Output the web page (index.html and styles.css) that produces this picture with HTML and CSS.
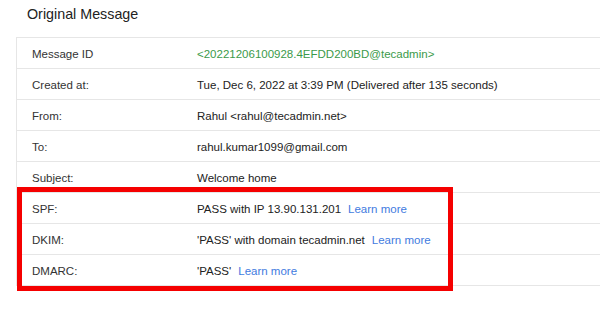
FILE: index.html
```html
<!DOCTYPE html>
<html>
<head>
<meta charset="utf-8">
<link rel="stylesheet" href="styles.css">
</head>
<body>
<div class="page">
  <div class="title">Original Message</div>
  <div class="table">
    <div class="row"><div class="label">Message ID</div><div class="value green">&lt;20221206100928.4EFDD200BD@tecadmin&gt;</div></div>
    <div class="row"><div class="label">Created at:</div><div class="value">Tue, Dec 6, 2022 at 3:39 PM (Delivered after 135 seconds)</div></div>
    <div class="row"><div class="label">From:</div><div class="value">Rahul &lt;rahul@tecadmin.net&gt;</div></div>
    <div class="row"><div class="label">To:</div><div class="value">rahul.kumar1099@gmail.com</div></div>
    <div class="row"><div class="label">Subject:</div><div class="value">Welcome home</div></div>
    <div class="row"><div class="label">SPF:</div><div class="value">PASS with IP 13.90.131.201<a class="learn">Learn more</a></div></div>
    <div class="row"><div class="label">DKIM:</div><div class="value">'PASS' with domain tecadmin.net<a class="learn">Learn more</a></div></div>
    <div class="row"><div class="label">DMARC:</div><div class="value">'PASS'<a class="learn">Learn more</a></div></div>
  </div>
  <div class="highlight"></div>
</div>
</body>
</html>
```
FILE: styles.css
```css
html, body {
  margin: 0;
  padding: 0;
  background: #fff;
}
.page {
  position: relative;
  width: 600px;
  height: 310px;
  font-family: "Liberation Sans", Arial, sans-serif;
  color: #222;
}
.title {
  height: 37px;
  box-sizing: border-box;
  padding: 6px 0 0 27px;
  font-size: 14.3px;
  line-height: 17px;
  color: #222;
}
.table {
  margin-left: 16px;
  border-left: 1px solid #e6e6e6;
  border-bottom: 1px solid #e6e6e6;
}
.row {
  display: grid;
  grid-template-columns: 180px 1fr;
  height: 31px;
  box-sizing: border-box;
  border-top: 1px solid #e6e6e6;
  padding-top: 2px;
  align-items: center;
  font-size: 11.5px;
}
.label {
  padding-left: 15px;
  color: #333;
}
.value {
  color: #222;
  white-space: nowrap;
}
.green {
  color: #3b9a4a;
}
.learn {
  margin-left: 7px;
  color: #3f7be0;
  text-decoration: none;
}
.highlight {
  position: absolute;
  left: 17px;
  top: 187px;
  width: 436px;
  height: 104px;
  box-sizing: border-box;
  border: 5px solid #f50000;
}
```
